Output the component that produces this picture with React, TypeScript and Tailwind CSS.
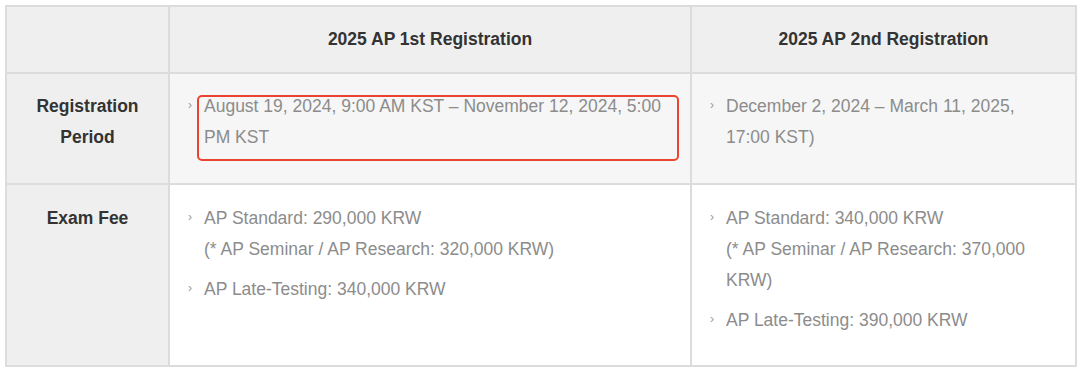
import type { ReactNode } from "react";

type Item = { lines: ReactNode; highlight?: boolean };

const periods: { label: string; cols: Item[][] }[] = [
  {
    label: "Registration Period",
    cols: [
      [{ lines: "August 19, 2024, 9:00 AM KST – November 12, 2024, 5:00 PM KST", highlight: true }],
      [{ lines: "December 2, 2024 – March 11, 2025, 17:00 KST)" }],
    ],
  },
  {
    label: "Exam Fee",
    cols: [
      [
        {
          lines: (
            <>
              AP Standard: 290,000 KRW
              <br />
              (* AP Seminar / AP Research: 320,000 KRW)
            </>
          ),
        },
        { lines: "AP Late-Testing: 340,000 KRW" },
      ],
      [
        {
          lines: (
            <>
              AP Standard: 340,000 KRW
              <br />
              (* AP Seminar / AP Research: 370,000 KRW)
            </>
          ),
        },
        { lines: "AP Late-Testing: 390,000 KRW" },
      ],
    ],
  },
];

function Bullets({ items }: { items: Item[] }) {
  return (
    <ul className="flex flex-col gap-[9px]">
      {items.map((it, i) => (
        <li key={i} className="flex">
          <span className="w-[16px] shrink-0 pt-[4px] text-[12px] leading-[20px] text-[#9a9a9a]">›</span>
          <span className="relative flex-1">
            {it.lines}
            {it.highlight && (
              <span className="pointer-events-none absolute top-[4px] bottom-[-8px] left-[-7px] right-[-9px] rounded-[5px] border-2 border-[#ec4330]" />
            )}
          </span>
        </li>
      ))}
    </ul>
  );
}

export default function App() {
  return (
    <div className="h-[368px] w-[1080px] overflow-hidden bg-white pl-[5px] pt-[5px] font-['Liberation_Sans',Arial,sans-serif] text-[17.5px] leading-[31px]">
      <table className="w-[1070px] table-fixed border-collapse">
        <colgroup>
          <col className="w-[163px]" />
          <col className="w-[522px]" />
          <col className="w-[385px]" />
        </colgroup>
        <thead>
          <tr className="h-[67px] bg-[#efefef] font-bold text-[#333]">
            <th className="border-2 border-[#dcdcdc]" />
            <th className="border-2 border-[#dcdcdc]">2025 AP 1st Registration</th>
            <th className="border-2 border-[#dcdcdc]">2025 AP 2nd Registration</th>
          </tr>
        </thead>
        <tbody>
          {periods.map((row, r) => {
            const pad = r === 0 ? "pt-[17px] pb-[26px]" : "pt-[18px] pb-[28px]";
            return (
              <tr key={row.label} className={r === 0 ? "h-[111px] bg-[#f6f6f6]" : "h-[182px] bg-white"}>
                <th className={`border-2 border-[#dcdcdc] bg-[#efefef] px-[12px] align-top font-bold text-[#333] ${pad}`}>
                  {row.label}
                </th>
                {row.cols.map((items, c) => (
                  <td
                    key={c}
                    className={`border-2 border-[#dcdcdc] pl-[18px] pr-[20px] align-top text-[#8c8c8c] ${pad}`}
                  >
                    <Bullets items={items} />
                  </td>
                ))}
              </tr>
            );
          })}
        </tbody>
      </table>
    </div>
  );
}
